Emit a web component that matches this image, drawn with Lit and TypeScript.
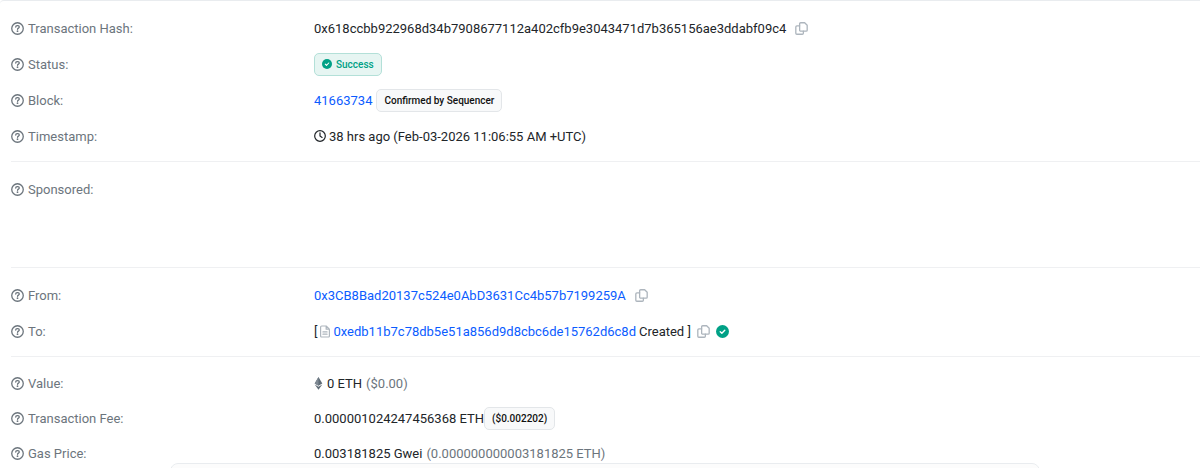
import { LitElement, html, css, svg } from "lit";
import { customElement, property } from "lit/decorators.js";

const helpIcon = html`<svg class="help" viewBox="0 0 16 16" aria-hidden="true">
  <circle cx="8" cy="8" r="7.1" fill="none" stroke="currentColor" stroke-width="1.6" />
  <path d="M5.8 6.2c0-1 .8-1.7 1.8-1.7h.8c1 0 1.8.7 1.8 1.7 0 1.3-2.1 1.4-2.1 2.8" fill="none" stroke="currentColor" stroke-width="1.6" stroke-linecap="round" />
  <circle cx="8" cy="11.3" r="1.1" fill="currentColor" />
</svg>`;

const checkShape = svg`<circle cx="8" cy="8" r="8" fill="currentColor" />
  <path d="M5.2 8.2l2 2 3.6-3.8" fill="none" stroke="#fff" stroke-width="1.7" stroke-linecap="round" stroke-linejoin="round" />`;

@customElement("copy-button")
export class CopyButton extends LitElement {
  @property() value = "";

  static styles = css`
    :host { display: inline-flex; }
    button {
      display: inline-flex;
      padding: 0;
      border: 0;
      background: none;
      color: #adb5bd;
      cursor: pointer;
    }
    svg { width: 13px; height: 13px; }
  `;

  private copy() {
    navigator.clipboard?.writeText(this.value);
  }

  render() {
    return html`<button type="button" aria-label="Copy" @click=${this.copy}>
      <svg viewBox="0 0 16 16" fill="none" stroke="currentColor" stroke-width="1.6" stroke-linejoin="round" stroke-linecap="round">
        <path d="M7 .9h4.9L15 4v6a1.3 1.3 0 0 1-1.3 1.3H7A1.3 1.3 0 0 1 5.7 10V2.2A1.3 1.3 0 0 1 7 .9z" />
        <path d="M5.7 4.7H2.3A1.3 1.3 0 0 0 1 6v7.8a1.3 1.3 0 0 0 1.3 1.3H9a1.3 1.3 0 0 0 1.3-1.3v-2.5" />
      </svg>
    </button>`;
  }
}

@customElement("detail-row")
export class DetailRow extends LitElement {
  @property() label = "";

  static styles = css`
    :host {
      display: grid;
      grid-template-columns: 303fr 886fr;
      align-items: center;
      min-height: 36px;
    }
    .label {
      display: flex;
      align-items: center;
      gap: 4px;
      color: #6c757d;
    }
    .help { width: 13px; height: 13px; }
    .value {
      display: flex;
      align-items: center;
      min-width: 0;
      white-space: nowrap;
    }
  `;

  render() {
    return html`
      <div class="label">${helpIcon}<span>${this.label}</span></div>
      <div class="value"><slot></slot></div>
    `;
  }
}

@customElement("app-root")
export class AppRoot extends LitElement {
  static styles = css`
    :host {
      display: block;
      height: 100vh;
      overflow: hidden;
      background: #fff;
      color: #212529;
      font: 13px/21px Roboto, sans-serif;
    }
    .card {
      border-top: 1px solid #e9ecef;
      border-top-left-radius: 4px;
      padding-left: 11px;
    }
    section {
      padding: 9px 0 7px;
      border-bottom: 1px solid #eff0f2;
    }
    section:last-child { border-bottom: 0; }
    .sponsored { min-height: 89px; }
    .amounts detail-row { min-height: 35px; }
    a { color: #0b5cff; text-decoration: none; }
    .muted { color: #6c757d; }
    .inline {
      display: inline-flex;
      align-items: center;
      gap: 4px;
    }
    .copyable {
      display: inline-flex;
      align-items: center;
      gap: 9px;
    }
    .tight { gap: 3px; }
    .snug { gap: 6px; }
    .badge {
      display: inline-flex;
      align-items: center;
      gap: 4px;
      padding: 0 7px;
      border: 1px solid #e3e6e9;
      border-radius: 5px;
      background: #f8f9fa;
      color: #111;
      font-size: 10px;
      font-weight: 500;
      line-height: 21px;
    }
    .success {
      border-color: #b3e0d8;
      background: #e6f5f2;
      color: #00a186;
    }
    .success svg { width: 10px; height: 10px; }
    .clock { width: 12px; height: 12px; }
    .document { width: 10px; height: 13px; color: #adb5bd; }
    .eth { width: 9px; height: 13px; }
    .verified { width: 13px; height: 13px; color: #00a186; }
    .notice {
      position: fixed;
      top: calc(100vh - 5px);
      left: 14.2%;
      width: 72.5%;
      height: 40px;
      box-sizing: border-box;
      border: 1px solid #e9ecef;
      border-radius: 8px;
      background: #fcfcfc;
    }
  `;

  render() {
    const hash = "0x618ccbb922968d34b7908677112a402cfb9e3043471d7b365156ae3ddabf09c4";
    const from = "0x3CB8Bad20137c524e0AbD3631Cc4b57b7199259A";
    const to = "0xedb11b7c78db5e51a856d9d8cbc6de15762d6c8d";
    return html`
      <main class="card">
        <section>
          <detail-row label="Transaction Hash:">
            <span class="copyable">${hash}<copy-button .value=${hash}></copy-button></span>
          </detail-row>
          <detail-row label="Status:">
            <span class="badge success"><svg viewBox="0 0 16 16">${checkShape}</svg>Success</span>
          </detail-row>
          <detail-row label="Block:">
            <span class="inline"><a href="#block">41663734</a><span class="badge">Confirmed by Sequencer</span></span>
          </detail-row>
          <detail-row label="Timestamp:">
            <span class="inline tight">
              <svg class="clock" viewBox="0 0 16 16" fill="none" stroke="currentColor" stroke-width="1.6" stroke-linecap="round" stroke-linejoin="round">
                <circle cx="8" cy="8" r="7.1" /><path d="M8 3.8V8l2.8 1.9" />
              </svg>
              38 hrs ago (Feb-03-2026 11:06:55 AM +UTC)
            </span>
          </detail-row>
        </section>
        <section class="sponsored">
          <detail-row label="Sponsored:"></detail-row>
        </section>
        <section>
          <detail-row label="From:">
            <span class="copyable"><a href="#from">${from}</a><copy-button .value=${from}></copy-button></span>
          </detail-row>
          <detail-row label="To:">
            <span class="copyable snug">
              <span class="inline tight">
                <span>[</span>
                <svg class="document" viewBox="0 0 13 16" fill="none" stroke="currentColor" stroke-width="1.5" stroke-linejoin="round" stroke-linecap="round">
                  <path d="M2.2.8H8L12.2 5v8.8a1.4 1.4 0 0 1-1.4 1.4H2.2A1.4 1.4 0 0 1 .8 13.8V2.2A1.4 1.4 0 0 1 2.2.8zM8 .8V5h4.2M3.8 8.5h5.4M3.8 11.5h5.4" />
                </svg>
                <a href="#to">${to}</a>
                <span>Created ]</span>
              </span>
              <copy-button .value=${to}></copy-button>
              <svg class="verified" viewBox="0 0 16 16">${checkShape}</svg>
            </span>
          </detail-row>
        </section>
        <section class="amounts">
          <detail-row label="Value:">
            <span class="inline">
              <svg class="eth" viewBox="0 0 9 14" fill="#5f6b76">
                <path d="M4.5 0L8.6 7 4.5 9.5.4 7z" /><path d="M.4 8l4.1 2.5L8.6 8 4.5 13.8z" />
                <path d="M4.5 0v9.5L.4 7z" fill="#7f8993" />
              </svg>
              <span>0 ETH</span><span class="muted">($0.00)</span>
            </span>
          </detail-row>
          <detail-row label="Transaction Fee:">
            <span>0.000001024247456368 ETH</span><span class="badge">($0.002202)</span>
          </detail-row>
          <detail-row label="Gas Price:">
            <span class="inline"><span>0.003181825 Gwei</span><span class="muted">(0.000000000003181825 ETH)</span></span>
          </detail-row>
        </section>
      </main>
      <aside class="notice" aria-label="Notice"></aside>
    `;
  }
}
